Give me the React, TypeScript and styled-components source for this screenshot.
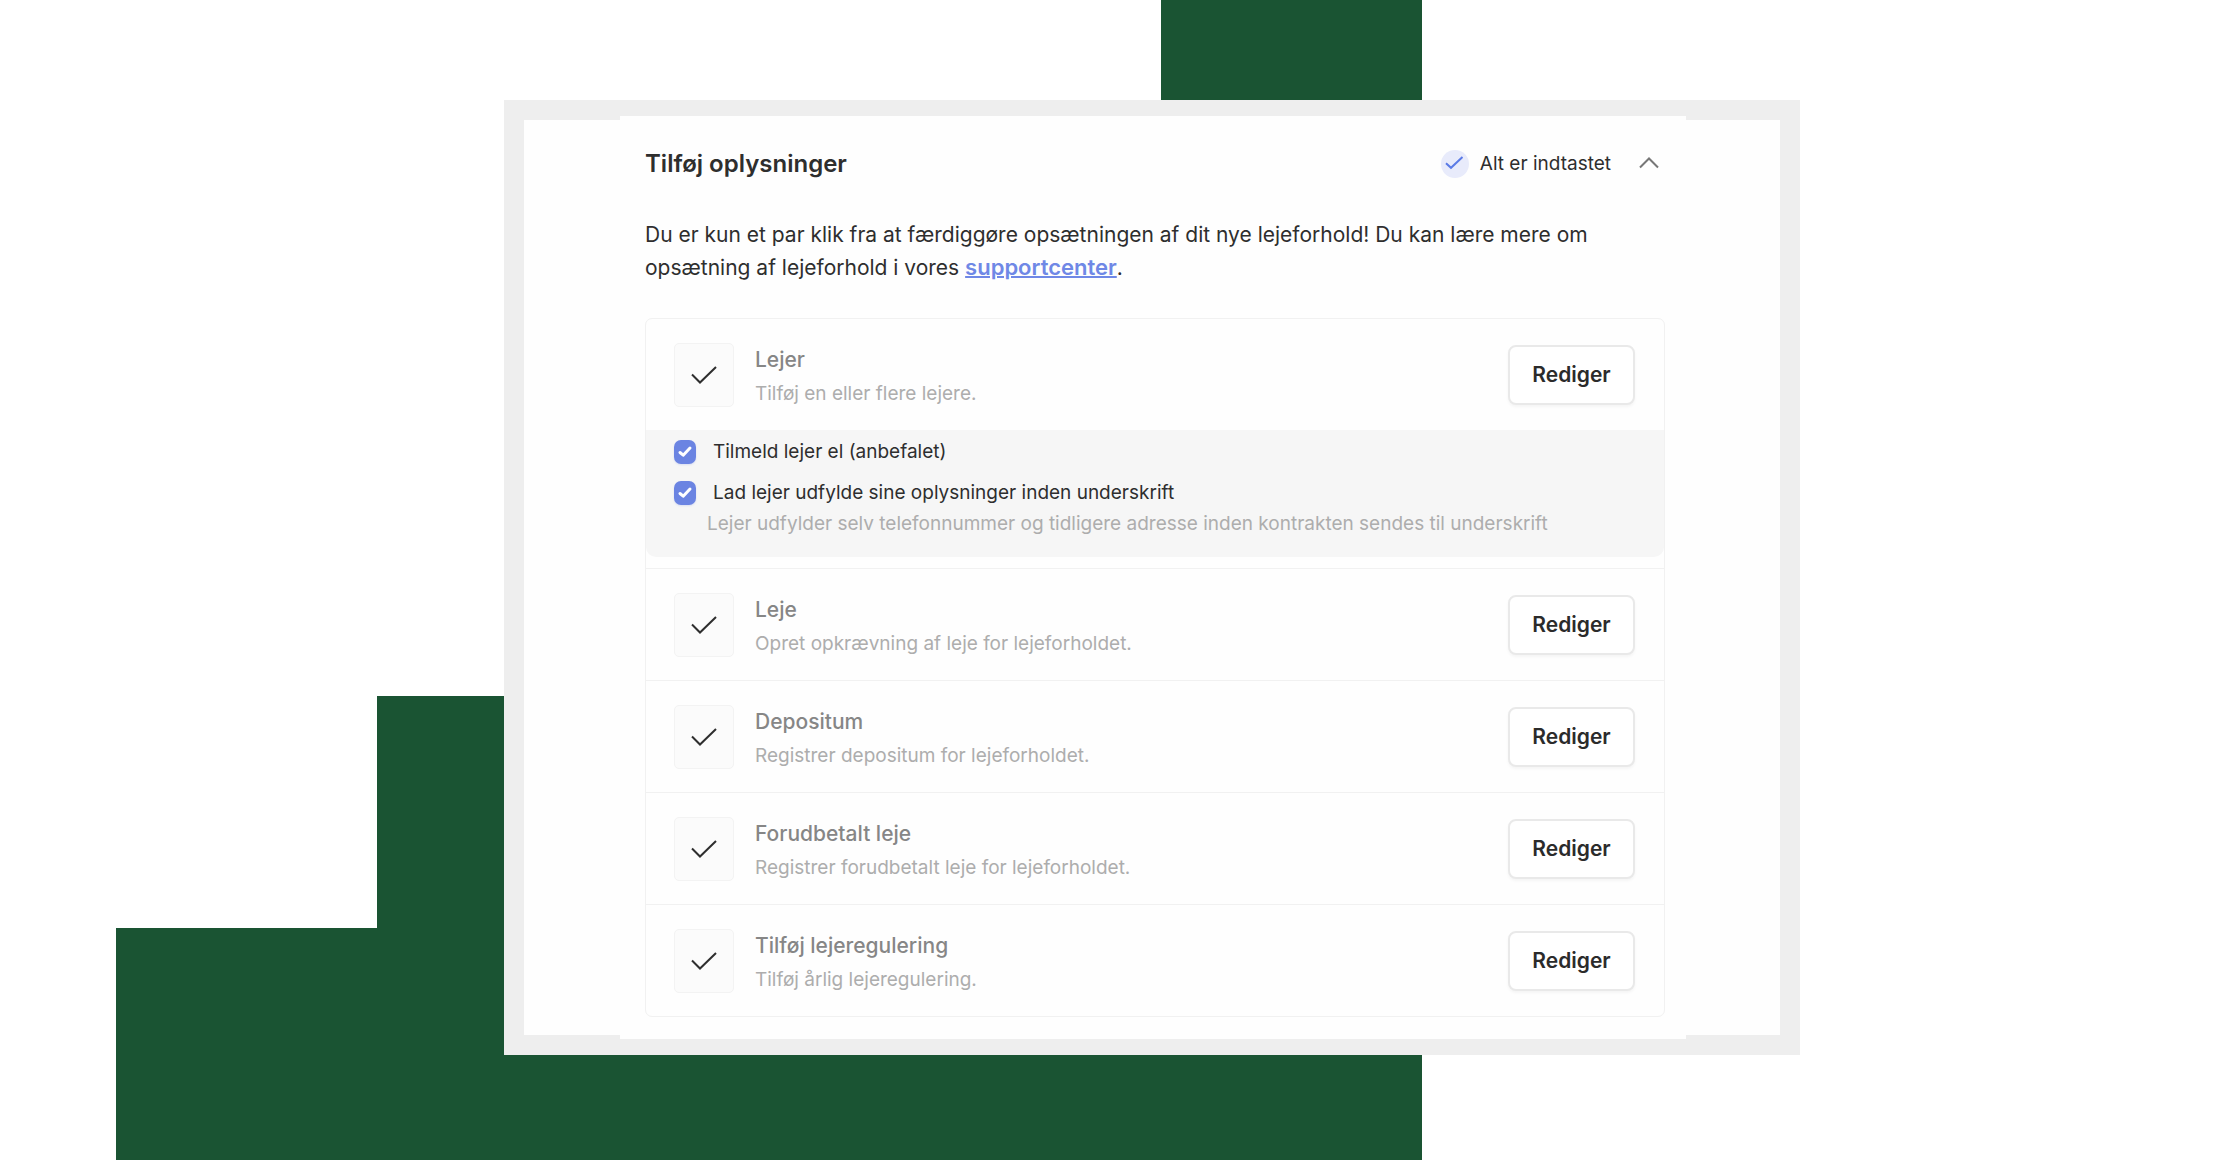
import React, { useState } from "react";
import styled, { createGlobalStyle } from "styled-components";

const GlobalStyle = createGlobalStyle`
  *, *::before, *::after { box-sizing: border-box; }
  body { margin: 0; background: #fff; }
`;

const Page = styled.div`
  position: relative;
  isolation: isolate;
  min-height: 100vh;
  display: grid;
  grid-template-columns: 504fr 1296fr 420fr;
  align-items: start;
  padding: 100px 0;
  color: #2e2e2e;
  font-family: Inter, "Liberation Sans", sans-serif;
  font-size: 21px;
  line-height: 33px;
`;

const Backdrop = styled.div`
  position: absolute;
  inset: 0;
  z-index: -1;
  display: grid;
  grid-template-columns: 116fr 261fr 784fr 261fr 798fr;
  grid-template-rows: repeat(5, 1fr);
`;

const Block = styled.div<{ $row: string; $column: string }>`
  grid-row: ${(p) => p.$row};
  grid-column: ${(p) => p.$column};
  background: #1a5433;
`;

const Frame = styled.main`
  grid-column: 2;
  display: grid;
  grid-template-columns: 96fr 1066fr 94fr;
  padding: 16px 20px;
  background: #eee;

  &::before,
  &::after {
    content: "";
    margin: 4px 0;
    background: #fefefe;
  }
`;

const Panel = styled.section`
  padding: 30px 21px 22px 25px;
  background: #fefefe;
`;

const Header = styled.header`
  display: flex;
  align-items: center;
  justify-content: space-between;
  padding-right: 6px;
`;

const Title = styled.h1`
  margin: 0;
  font-size: 24px;
  font-weight: 600;
  line-height: 36px;
`;

const Status = styled.div`
  display: flex;
  align-items: center;
  gap: 11px;
  font-size: 19px;
  line-height: 28px;
`;

const StatusBadge = styled.svg`
  width: 28px;
  height: 28px;
  border-radius: 50%;
  background: #e8ebfb;
  color: #5b7be6;
`;

const Collapse = styled.button`
  display: flex;
  margin: 0 0 0 17px;
  padding: 0;
  border: 0;
  background: none;
  color: #777;
  cursor: pointer;
`;

const Intro = styled.p`
  margin: 36px 0 34px;
`;

const SupportLink = styled.a`
  color: #6f88e6;
  font-size: 22px;
  font-weight: 600;
  text-decoration-thickness: 2px;
`;

const List = styled.ul`
  margin: 0;
  padding: 0;
  border: 1px solid #f1f1f1;
  border-radius: 7px;
  list-style: none;
`;

const Item = styled.li`
  & + & {
    border-top: 1px solid #f1f1f1;
  }
`;

const Row = styled.div`
  display: flex;
  align-items: center;
  gap: 21px;
  min-height: 111px;
  padding: 0 29px 0 28px;
`;

const IconTile = styled.div`
  display: grid;
  place-items: center;
  width: 60px;
  height: 64px;
  border: 1px solid #f3f3f3;
  border-radius: 5px;
  background: #fbfbfb;
  color: #2e2e2e;
`;

const RowText = styled.div`
  flex: 1;
  padding-top: 4px;
`;

const RowTitle = styled.h2`
  margin: 0;
  color: #868686;
  font-size: 21px;
  font-weight: 500;
  line-height: 34px;
`;

const Muted = styled.p<{ $lineHeight: number }>`
  margin: 0;
  color: #adadad;
  font-size: 19px;
  line-height: ${(p) => p.$lineHeight}px;
`;

const EditButton = styled.button`
  min-width: 127px;
  height: 60px;
  padding: 0 22px;
  border: 2px solid #e9e9e9;
  border-radius: 8px;
  background: #fff;
  box-shadow: 0 2px 3px rgba(0, 0, 0, 0.04);
  color: #2b2b2b;
  font: inherit;
  font-weight: 600;
  cursor: pointer;
`;

const Options = styled.div`
  display: flex;
  flex-direction: column;
  gap: 17px;
  margin-bottom: 11px;
  padding: 10px 28px 18px;
  border-radius: 0 0 10px 10px;
  background: #f6f6f6;
`;

const Option = styled.label`
  display: flex;
  align-items: center;
  gap: 17px;
  font-size: 19px;
  line-height: 24px;
  cursor: pointer;
`;

const Box = styled.span`
  display: grid;

  & > * {
    grid-area: 1 / 1;
  }
`;

const BoxInput = styled.input`
  appearance: none;
  width: 22px;
  height: 24px;
  margin: 0;
  border-radius: 7px;
  background: #fff;
  box-shadow: inset 0 0 0 1px #ccc;
  cursor: inherit;

  &:checked {
    background: #6b84e2;
    box-shadow: 0 1px 2px rgba(107, 132, 226, 0.2);
  }

  &:not(:checked) + svg {
    visibility: hidden;
  }
`;

const OptionNote = styled.div`
  margin-top: -13px;
  padding-left: 33px;
`;

function Checkbox({ label }: { label: string }) {
  const [checked, setChecked] = useState(true);
  return (
    <Option>
      <Box>
        <BoxInput type="checkbox" checked={checked} onChange={() => setChecked(!checked)} />
        <svg width="22" height="24" viewBox="0 0 22 24" fill="none" stroke="#fff" strokeWidth="3" strokeLinecap="round" strokeLinejoin="round" pointerEvents="none">
          <path d="M6 12.5 9.2 15.2 16 8" />
        </svg>
      </Box>
      {label}
    </Option>
  );
}

const items = [
  { title: "Lejer", text: "Tilføj en eller flere lejere.", hasOptions: true },
  { title: "Leje", text: "Opret opkrævning af leje for lejeforholdet." },
  { title: "Depositum", text: "Registrer depositum for lejeforholdet." },
  { title: "Forudbetalt leje", text: "Registrer forudbetalt leje for lejeforholdet." },
  { title: "Tilføj lejeregulering", text: "Tilføj årlig lejeregulering." },
];

export default function App() {
  return (
    <>
      <GlobalStyle />
      <Page>
        <Backdrop aria-hidden="true">
          <Block $row="1" $column="4" />
          <Block $row="4" $column="2 / 5" hidden />
          <Block $row="4" $column="3 / 5" />
          <Block $row="5" $column="2 / 5" />
        </Backdrop>
        <Frame>
          <Panel>
            <Header>
              <Title>Tilføj oplysninger</Title>
              <Status>
                <StatusBadge viewBox="0 0 28 28" fill="none" stroke="currentColor" strokeWidth="2" aria-hidden="true">
                  <path d="M5 13.2 10 17.8 21.5 7" />
                </StatusBadge>
                Alt er indtastet
                <Collapse type="button" aria-label="Skjul">
                  <svg width="20" height="14" viewBox="0 0 20 14" fill="none" stroke="currentColor" strokeWidth="2">
                    <path d="M1 10.5 10 1.5 19 10.5" />
                  </svg>
                </Collapse>
              </Status>
            </Header>
            <Intro>
              Du er kun et par klik fra at færdiggøre opsætningen af dit nye lejeforhold! Du kan lære mere om
              opsætning af lejeforhold i vores <SupportLink href="#support">supportcenter</SupportLink>.
            </Intro>
            <List>
              {items.map((item) => (
                <Item key={item.title}>
                  <Row>
                    <IconTile>
                      <svg width="26" height="18" viewBox="0 0 26 18" fill="none" stroke="currentColor" strokeWidth="2" aria-hidden="true">
                        <path d="M1 8.5 9 16.5 25 1" />
                      </svg>
                    </IconTile>
                    <RowText>
                      <RowTitle>{item.title}</RowTitle>
                      <Muted $lineHeight={34}>{item.text}</Muted>
                    </RowText>
                    <EditButton type="button">Rediger</EditButton>
                  </Row>
                  {item.hasOptions && (
                    <Options>
                      <Checkbox label="Tilmeld lejer el (anbefalet)" />
                      <Checkbox label="Lad lejer udfylde sine oplysninger inden underskrift" />
                      <OptionNote>
                        <Muted $lineHeight={30}>
                          Lejer udfylder selv telefonnummer og tidligere adresse inden kontrakten sendes til underskrift
                        </Muted>
                      </OptionNote>
                    </Options>
                  )}
                </Item>
              ))}
            </List>
          </Panel>
        </Frame>
      </Page>
    </>
  );
}
